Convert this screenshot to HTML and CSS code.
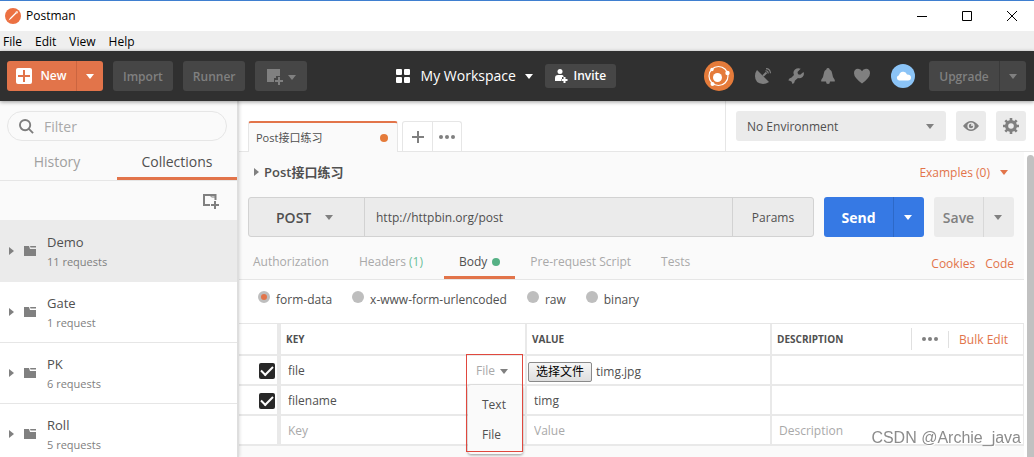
FILE: index.html
```html
<!DOCTYPE html>
<html lang="zh-CN">
<head>
<meta charset="utf-8">
<title>Postman</title>
<link rel="stylesheet" href="styles.css">
</head>
<body>
<header class="titlebar">
  <svg class="app-logo" width="16" height="16" viewBox="0 0 16 16"><circle cx="8" cy="8" r="8" fill="#ec7142"/><path d="M3.500 12.500l1.500-2.500 6-6 .9.900-6 6z" fill="#fff"/><circle cx="11.800" cy="4.200" r="1.200" fill="#fbd9c8"/></svg>
  <span class="app-name">Postman</span>
  <div class="window-controls">
    <button aria-label="Minimize"><svg width="10" height="10" viewBox="0 0 10 10"><path d="M0 5.500h10" stroke="#000"/></svg></button>
    <button aria-label="Maximize"><svg width="10" height="10" viewBox="0 0 10 10"><path d="M.5.5h9v9h-9z" fill="none" stroke="#000"/></svg></button>
    <button aria-label="Close"><svg width="10" height="10" viewBox="0 0 10 10"><path d="M0 0l10 10M10 0L0 10" stroke="#000"/></svg></button>
  </div>
</header>
<nav class="menubar"><a href="#">File</a><a href="#">Edit</a><a href="#">View</a><a href="#">Help</a></nav>

<div class="toolbar">
  <div class="tool-left">
    <div class="split new">
      <button class="split-main"><svg width="16" height="16" viewBox="0 0 16 16"><rect width="16" height="16" rx="2" fill="#fff"/><path d="M8 2v12M2 8h12" stroke="#e2744a" stroke-width="2"/></svg>New</button>
      <button class="split-arrow" aria-label="New options"><i class="caret"></i></button>
    </div>
    <button class="dark-btn">Import</button>
    <button class="dark-btn">Runner</button>
    <button class="dark-btn window-btn" aria-label="New window"><svg width="17" height="17" viewBox="0 0 17 17"><path d="M0 0h13v7h-4v2H7v4H0z" fill="#808080"/><path d="M12 8v8M8 12h8" stroke="#808080" stroke-width="2"/></svg><i class="caret"></i></button>
  </div>
  <div class="tool-center">
    <button class="workspace"><svg width="14" height="14" viewBox="0 0 14 14" fill="#fff"><rect width="6" height="6" rx="1"/><rect x="8" width="6" height="6" rx="1"/><rect y="8" width="6" height="6" rx="1"/><rect x="8" y="8" width="6" height="6" rx="1"/></svg>My Workspace<i class="caret"></i></button>
    <button class="invite"><svg width="13" height="14" viewBox="0 0 13 14"><circle cx="5" cy="2.500" r="2.500" fill="#fff"/><path d="M0 12V9q0-3 3-3h4q1 0 1.500 1v1H7v2H6v2z" fill="#fff"/><path d="M9.500 8v6M6.500 11h6" stroke="#fff" stroke-width="2"/></svg>Invite</button>
  </div>
  <div class="tool-right">
    <button class="icon-btn sync" aria-label="Sync"><svg width="30" height="30" viewBox="0 0 30 30"><circle cx="15" cy="15" r="15" fill="#e57b3a"/><circle cx="14.500" cy="15" r="9.500" fill="none" stroke="#fff" stroke-width="1.200"/><g fill="#fff"><circle cx="13.500" cy="16.500" r="4.500"/><circle cx="23.500" cy="12" r="2.200"/><circle cx="8" cy="8.500" r="1.700"/><circle cx="8.500" cy="23" r="2"/></g></svg></button>
    <button class="icon-btn" aria-label="Capture requests"><svg width="16" height="16" viewBox="0 0 16 16"><path d="M2 2L14 14Q11 16 8 16 0 15.500 0 8 0 4.500 2 2z" fill="#808080"/><path d="M8 8l3.500-3.500" stroke="#808080" stroke-width="2"/><path d="M10.500 2.800q2.700 0 2.700 2.700M11 .6q4.300.2 4.500 4.700" fill="none" stroke="#808080" stroke-width="1.100"/></svg></button>
    <button class="icon-btn" aria-label="Settings"><svg width="16" height="16" viewBox="0 0 16 16"><path d="M12.700.7L9.500 4l.5 2.200 2.200.5L15.500 4q1.200 3-1 5-2.200 1.800-4.500 1L7 12.500Q6.700 15 4.500 16l-1-2.500L.3 12.300Q1 10 3.500 9.500L6 7Q4.500 3.500 7 1.500 9.500-.7 12.700.7z" fill="#808080"/></svg></button>
    <button class="icon-btn" aria-label="Notifications"><svg width="14" height="16" viewBox="0 0 14 16"><path d="M7 0q1.500 0 1.500 1.300Q11 2.500 11.300 6q.2 3.500 2.500 6v1.500H9Q9 16 7 16t-2-2.500H.2V12q2.300-2.500 2.500-6Q3 2.500 5.500 1.300 5.500 0 7 0z" fill="#808080"/></svg></button>
    <button class="icon-btn" aria-label="Favourites"><svg width="16" height="16" viewBox="0 0 16 16"><path d="M8 15.500Q0 9.500 0 5.200 0 .7 4 .7q3 0 4 2.500Q9 .7 12 .7q4 0 4 4.500 0 4.300-8 10.300z" fill="#808080"/></svg></button>
    <button class="icon-btn" aria-label="Account"><svg width="24" height="24" viewBox="0 0 24 24"><circle cx="12" cy="12" r="12" fill="#8bc4f7"/><path d="M8 16.500a2.700 2.700 0 0 1 0-5.300q1-4 4.500-3.500 2.500.3 3.500 2.800 4 0 4 3 0 3-3 3z" fill="#fff"/></svg></button>
    <div class="split upgrade">
      <button class="split-main">Upgrade</button>
      <button class="split-arrow" aria-label="Upgrade options"><i class="caret"></i></button>
    </div>
  </div>
</div>

<div class="workarea">
  <aside class="sidebar">
    <label class="filter"><svg width="15" height="15" viewBox="0 0 16 16"><circle cx="6.500" cy="6.500" r="5.500" fill="none" stroke="#7d7d7d" stroke-width="2"/><path d="M10.500 10.500L15 15" stroke="#7d7d7d" stroke-width="2"/></svg><input type="text" placeholder="Filter" aria-label="Filter"></label>
    <div class="side-tabs"><button>History</button><button class="active">Collections</button></div>
    <div class="side-actions"><button aria-label="New collection"><svg width="16" height="16" viewBox="0 0 16 16" fill="none" stroke="#808080" stroke-width="2"><path d="M7 12H1V2h11.500v5"/><path d="M12 8v8M8 12h8"/><path d="M7 2l1.500 2h4" stroke-width="1"/></svg></button></div>
    <ul class="collections">
      <li class="selected"><i class="twisty"></i><svg class="folder" width="12" height="10" viewBox="0 0 12 10"><path d="M0 0h5l1 3h6v7H0zM6 0h6v1.500H6.500z" fill="#808080"/></svg><div><a href="#">Demo</a><p>11 requests</p></div></li>
      <li><i class="twisty"></i><svg class="folder" width="12" height="10" viewBox="0 0 12 10"><path d="M0 0h5l1 3h6v7H0zM6 0h6v1.500H6.500z" fill="#808080"/></svg><div><a href="#">Gate</a><p>1 request</p></div></li>
      <li><i class="twisty"></i><svg class="folder" width="12" height="10" viewBox="0 0 12 10"><path d="M0 0h5l1 3h6v7H0zM6 0h6v1.500H6.500z" fill="#808080"/></svg><div><a href="#">PK</a><p>6 requests</p></div></li>
      <li><i class="twisty"></i><svg class="folder" width="12" height="10" viewBox="0 0 12 10"><path d="M0 0h5l1 3h6v7H0zM6 0h6v1.500H6.500z" fill="#808080"/></svg><div><a href="#">Roll</a><p>5 requests</p></div></li>
    </ul>
  </aside>

  <main class="main">
    <div class="top-strip">
      <div class="request-tabs">
        <button class="request-tab">Post接口练习<i class="unsaved"></i></button>
        <div class="tab-tools">
          <button aria-label="New tab"><svg width="12" height="12" viewBox="0 0 12 12"><path d="M6 0v12M0 6h12" stroke="#808080" stroke-width="2"/></svg></button>
          <button aria-label="Tab options"><svg width="16" height="4" viewBox="0 0 16 4" fill="#808080"><circle cx="2" cy="2" r="2"/><circle cx="8" cy="2" r="2"/><circle cx="14" cy="2" r="2"/></svg></button>
        </div>
      </div>
      <div class="environment">
        <div class="select-box env-select"><select aria-label="Environment"><option>No Environment</option></select><i class="caret"></i></div>
        <button class="square" aria-label="Environment quick look"><svg width="16" height="10" viewBox="0 0 16 10"><path d="M0 5Q8-5 16 5 8 15 0 5z" fill="#808080"/><circle cx="8" cy="5" r="3.600" fill="#ebebeb"/><circle cx="8" cy="5" r="2.200" fill="#808080"/><circle cx="9" cy="4" r="1" fill="#ebebeb"/></svg></button>
        <button class="square" aria-label="Manage environments"><svg width="16" height="16" viewBox="0 0 16 16"><g stroke="#808080" stroke-width="2.600"><path d="M8 0v16M0 8h16M2.300 2.300l11.400 11.400M13.700 2.300L2.300 13.700"/></g><circle cx="8" cy="8" r="6" fill="#808080"/><circle cx="8" cy="8" r="2.800" fill="#ebebeb"/></svg></button>
      </div>
    </div>

    <div class="scroll-area">
      <div class="request">
        <section class="builder">
          <div class="request-head"><h1><i class="twisty"></i>Post接口练习</h1><button class="examples">Examples (0)<i class="caret"></i></button></div>
          <div class="url-row">
            <div class="url-group">
              <div class="select-box method"><select aria-label="Method"><option>POST</option></select><i class="caret"></i></div>
              <input class="url" type="text" value="http://httpbin.org/post" aria-label="Request URL">
              <button class="params">Params</button>
            </div>
            <div class="split send"><button class="split-main">Send</button><button class="split-arrow" aria-label="Send options"><i class="caret"></i></button></div>
            <div class="split save"><button class="split-main">Save</button><button class="split-arrow" aria-label="Save options"><i class="caret"></i></button></div>
          </div>
          <div class="section-tabs">
            <button>Authorization</button>
            <button>Headers <span class="count">(1)</span></button>
            <button class="active">Body<i class="dot"></i></button>
            <button>Pre-request Script</button>
            <button>Tests</button>
            <div class="links"><a href="#">Cookies</a><a href="#">Code</a></div>
          </div>
        </section>

        <div class="body-types">
          <label><input type="radio" name="mode" checked><span>form-data</span></label>
          <label><input type="radio" name="mode"><span>x-www-form-urlencoded</span></label>
          <label><input type="radio" name="mode"><span>raw</span></label>
          <label><input type="radio" name="mode"><span>binary</span></label>
        </div>

        <table class="params-table">
          <thead>
            <tr><th class="col-check"></th><th class="col-key">KEY</th><th class="col-value">VALUE</th>
              <th><div class="desc-head"><span>DESCRIPTION</span><div class="desc-tools"><button class="more" aria-label="Columns"><svg width="16" height="4" viewBox="0 0 16 4" fill="#808080"><circle cx="2" cy="2" r="2"/><circle cx="8" cy="2" r="2"/><circle cx="14" cy="2" r="2"/></svg></button><a class="bulk" href="#">Bulk Edit</a></div></div></th></tr>
          </thead>
          <tbody>
            <tr><td class="check"><input type="checkbox" checked aria-label="Enable file"></td>
              <td class="key-cell"><div class="key-line"><input type="text" value="file" aria-label="Key"><button class="type-btn">File<i class="caret"></i></button></div>
                <div class="type-menu"><button>Text</button><button>File</button></div>
                <div class="highlight"></div></td>
              <td><div class="file-pick"><button>选择文件</button><span>timg.jpg</span></div></td>
              <td><input type="text" aria-label="Description"></td></tr>
            <tr><td class="check"><input type="checkbox" checked aria-label="Enable filename"></td><td><input type="text" value="filename" aria-label="Key"></td><td><input type="text" value="timg" aria-label="Value"></td><td><input type="text" aria-label="Description"></td></tr>
            <tr><td></td><td><input type="text" placeholder="Key" aria-label="Key"></td><td><input type="text" placeholder="Value" aria-label="Value"></td><td><input type="text" placeholder="Description" aria-label="Description"></td></tr>
          </tbody>
        </table>
      </div>
      <div class="scrollbar"></div>
    </div>
  </main>
</div>
<div class="watermark">CSDN @Archie_java</div>
</body>
</html>
```
FILE: styles.css
```css
* { box-sizing: border-box; }
body {
  margin: 0;
  height: 100vh;
  display: flex;
  flex-direction: column;
  overflow: hidden;
  background: #fff;
  color: #505050;
  font: 12px/18px "Open Sans", "Noto Sans CJK SC", sans-serif;
}
button, input, select { font: inherit; color: inherit; margin: 0; padding: 0; border: 0; background: none; }
button { display: flex; align-items: center; justify-content: center; }
input, select { outline: 0; min-width: 0; }
input::placeholder { color: #a9a9a9; opacity: 1; }
a { color: inherit; text-decoration: none; }
svg { display: block; flex: none; }

.caret { flex: none; border: 4px solid transparent; border-top: 5px solid currentColor; border-bottom: 0; }
.twisty { flex: none; border: 4px solid transparent; border-left: 5px solid #808080; border-right: 0; }

.titlebar { flex: none; display: flex; align-items: center; height: 31px; padding: 0 17px 0 5px; border-top: 1px solid #3f7fd0; color: #000; }
.app-name { margin-left: 5px; }
.window-controls { display: flex; gap: 35px; margin-left: auto; }
.window-controls button { width: 10px; height: 10px; }
.menubar { flex: none; display: flex; gap: 13px; height: 20px; line-height: 21px; padding-left: 3px; background: #efefef; color: #000; }

.toolbar { flex: none; position: relative; z-index: 2; display: flex; align-items: center; justify-content: space-between; height: 50px; padding: 0 8px 0 7px; background: #303030; box-shadow: 0 1px 4px rgba(0,0,0,.4); font-weight: 600; }
.tool-left, .tool-center, .tool-right { display: flex; align-items: center; }
.tool-left { gap: 10px; }
.split { display: flex; height: 30px; border-radius: 3px; overflow: hidden; }
.toolbar .split-main, .dark-btn { padding-top: 2px; }
.new { background: #e2744a; color: #fff; }
.new .split-main { width: 69px; gap: 8px; padding-top: 0; }
.new .split-arrow { width: 27px; border-left: 1px solid #cb6540; }
.dark-btn { height: 30px; padding-left: 10px; padding-right: 10px; border-radius: 3px; background: #464646; color: #808080; }
.window-btn { width: 52px; gap: 4px; }
.tool-center { gap: 12px; }
.workspace { gap: 11px; color: #fff; font-size: 14px; font-weight: 500; }
.workspace .caret { margin-left: -2px; }
.invite { height: 24px; width: 71px; gap: 6px; border-radius: 3px; background: #464646; color: #fff; }
.tool-right { gap: 17px; }
.sync { margin-right: 4px; }
.icon-btn:nth-child(5) { margin-right: 4px; margin-left: 2px; }
.upgrade { background: #464646; color: #808080; margin-left: -3px; }
.upgrade .split-main { width: 70px; }
.upgrade .split-arrow { width: 27px; border-left: 1px solid #3a3a3a; }

.workarea { flex: 1; min-height: 0; display: flex; }
.sidebar { flex: none; width: 239px; border-right: 2px solid #dedede; background: linear-gradient(#fafafa 119px, #fff 119px); box-shadow: 1px 0 3px rgba(0,0,0,.12); z-index: 1; }
.filter { display: flex; align-items: center; gap: 10px; height: 30px; margin: 10px 10px 0 7px; padding: 1px 10px 0 11px; border: 1px solid #e6e6e6; border-radius: 15px; font-size: 14px; }
.filter input { flex: 1; }
.side-tabs { display: flex; height: 40px; border-bottom: 1px solid #e6e6e6; font-size: 14px; }
.side-tabs button { flex: 1; color: #a0a0a0; padding: 5px 3px 0 0; border-bottom: 3px solid transparent; }
.side-tabs .active { color: #505050; border-color: #e2744a; flex: 0 0 120px; padding-right: 0; }
.side-actions { display: flex; align-items: center; justify-content: flex-end; height: 39px; padding-right: 18px; }
.collections { margin: 0; padding: 0; list-style: none; }
.collections li { display: flex; align-items: center; height: 61px; padding-left: 9px; border-bottom: 1px solid #e6e6e6; }
.collections .selected { height: 62px; background: #ebebeb; border-color: #ebebeb; }
.collections div { padding-top: 2px; }
.folder { margin: 0 11px 0 10px; }
.collections a { display: block; font-size: 13px; line-height: 20px; }
.collections p { margin: 0; font-size: 11px; line-height: 20px; color: #808080; }

.main { flex: 1; min-width: 0; display: flex; flex-direction: column; }
.top-strip { flex: none; display: flex; justify-content: space-between; height: 51px; padding-left: 9px; border-bottom: 1px solid #e6e6e6; }
.request-tabs { display: flex; align-items: flex-end; gap: 4px; }
.request-tab { justify-content: space-between; width: 150px; height: 31px; margin-bottom: -1px; padding: 0 9px 0 7px; border: 1px solid #e6e6e6; border-top: 2px solid #e2744a; border-bottom: 0; border-radius: 3px 3px 0 0; background: #fafafa; font-size: 11px; }
.unsaved { width: 8px; height: 8px; border-radius: 50%; background: #e57b3a; }
.tab-tools { display: flex; height: 30px; border: 1px solid #e6e6e6; border-bottom: 0; border-radius: 3px 3px 0 0; }
.tab-tools button { width: 28px; padding-top: 1px; }
.tab-tools button:first-child { width: 30px; border-right: 1px solid #e6e6e6; }
.environment { display: flex; gap: 10px; padding: 10px 8px 0 10px; border-left: 1px solid #e6e6e6; }
.select-box { position: relative; display: flex; align-items: center; }
.select-box select { appearance: none; width: 100%; height: 100%; }
.select-box .caret { position: absolute; pointer-events: none; color: #808080; }
.env-select { width: 210px; height: 30px; border-radius: 3px; background: #ebebeb; }
.env-select select { padding: 2px 0 0 11px; }
.env-select .caret { right: 12px; }
.square { width: 30px; height: 30px; border-radius: 3px; background: #ebebeb; }

.scroll-area { flex: 1; min-height: 0; display: flex; gap: 3px; }
.scrollbar { flex: none; width: 7px; margin-top: 3px; border-radius: 4px 4px 0 0; background: #c1c1c1; }
.request { flex: 1; min-width: 0; background: #fafafa; }
.builder { border-bottom: 1px solid #e6e6e6; }
.request-head { display: flex; align-items: center; justify-content: space-between; height: 45px; padding: 0 16px 0 15px; }
.request-head h1 { display: flex; align-items: center; gap: 5px; margin: 0; padding-bottom: 5px; font-size: 13px; font-weight: 600; }
.examples { gap: 10px; padding-bottom: 4px; color: #e2744a; }
.url-row { display: flex; gap: 10px; height: 40px; padding: 0 10px 0 9px; }
.url-group { flex: 1; min-width: 0; display: flex; border: 1px solid #d2d2d2; border-radius: 3px; background: #ebebeb; }
.method { flex: none; width: 116px; border-right: 1px solid #d2d2d2; font-size: 14px; font-weight: 600; }
.method select { padding: 2px 0 0 27px; }
.method .caret { right: 31px; }
.url { flex: 1; padding: 1px 0 0 11px; }
.params { flex: none; width: 81px; padding-top: 2px; border-left: 1px solid #d2d2d2; }
.url-row .split { height: 40px; font-size: 14px; font-weight: 600; }
.url-row .split-main { padding-top: 2px; }
.send { background: #3679e4; color: #fff; }
.send .split-main { width: 69px; font-weight: 700; }
.send .split-arrow { width: 31px; padding-right: 2px; border-left: 1px solid #2d69c8; }
.save { background: #ebebeb; color: #808080; }
.save .split-main { width: 49px; }
.save .split-arrow { width: 31px; padding-right: 2px; border-left: 1px solid #d8d8d8; }
.section-tabs { display: flex; height: 42px; padding-right: 10px; }
.section-tabs button { padding: 12px 15px 2px; border-bottom: 3px solid transparent; color: #a9a9a9; white-space: pre; }
.section-tabs button:first-child { padding-left: 14px; }
.section-tabs .active { color: #505050; border-color: #e2744a; margin-left: 6px; }
.count { color: #6bbf99; }
.dot { width: 8px; height: 8px; margin-left: 5px; border-radius: 50%; background: #56b185; }
.links { display: flex; gap: 10px; margin-left: auto; padding-top: 18px; color: #e2744a; }
.body-types { display: flex; gap: 20px; height: 43px; padding: 11px 0 0 19px; background: #fff; }
.body-types label { display: flex; height: 18px; gap: 6px; }
.body-types input { appearance: none; width: 12px; height: 12px; border-radius: 50%; background: #bebebe; }
.body-types input:checked { background: #e2744a; border: 3px solid #bebebe; }

.params-table { width: 100%; table-layout: fixed; border-spacing: 0; border-top: 1px solid #e6e6e6; background: #fff; }
.params-table th, .params-table td { padding: 0; height: 30px; border-right: 2px solid #e9e9e9; border-bottom: 2px solid #e9e9e9; }
.params-table th:last-child, .params-table td:last-child { border-right-width: 1px; }
.params-table th:first-child, .params-table td:first-child { border-right-width: 4px; }
.params-table th { height: 32px; padding-left: 5px; text-align: left; font-size: 10px; font-weight: 700; }
.col-check { width: 42px; }
.col-key { width: 246px; }
.col-value { width: 245px; }
.params-table td input[type="text"] { display: block; width: 100%; height: 28px; padding: 1px 0 0 7px; }
.params-table .check { padding: 1px 0 0 20px; }
.params-table input[type="checkbox"] { appearance: none; display: grid; place-items: center; width: 16px; height: 16px; border-radius: 2px; background: #282828; }
.params-table input[type="checkbox"]::after { content: ""; width: 10px; height: 5px; border: solid #fff; border-width: 0 0 2px 2px; transform: translateY(-1px) rotate(-45deg); }
.desc-head, .desc-tools { display: flex; align-items: center; }
.desc-head { justify-content: space-between; }
.more { width: 37px; height: 22px; border-left: 1px solid #e0e0e0; }
.bulk { padding: 0 15px 0 10px; border-left: 1px solid #e0e0e0; color: #e2744a; font-size: 12px; font-weight: 400; line-height: 17px; }
.key-cell { position: relative; }
.key-line { display: flex; }
.type-btn { flex: none; gap: 5px; padding: 2px 17px 0 0; color: #a9a9a9; }
.type-btn .caret { color: #808080; }
.type-menu { position: absolute; z-index: 2; top: 29px; right: 2px; width: 55px; padding: 5px 0 4px; border-radius: 3px; background: #fafafa; box-shadow: 0 1px 3px rgba(0,0,0,.4); }
.type-menu button { width: 100%; height: 30px; padding-left: 14px; justify-content: flex-start; }
.highlight { position: absolute; z-index: 3; top: -2px; right: 2px; width: 57px; height: 98px; border: 1px solid #e0483e; pointer-events: none; }
.file-pick { display: flex; align-items: center; gap: 4px; padding: 4px 0 0 1px; }
.file-pick button { width: 64px; height: 20px; border: 1px solid #8a8a8a; border-radius: 2px; background: linear-gradient(#f6f6f6, #dedede); color: #000; }
.watermark { position: fixed; z-index: 4; right: 13px; bottom: 9px; color: #8c8c8c; font: 16px/20px "Liberation Sans", sans-serif; text-shadow: 1px 1px 0 #fff; pointer-events: none; }
```
